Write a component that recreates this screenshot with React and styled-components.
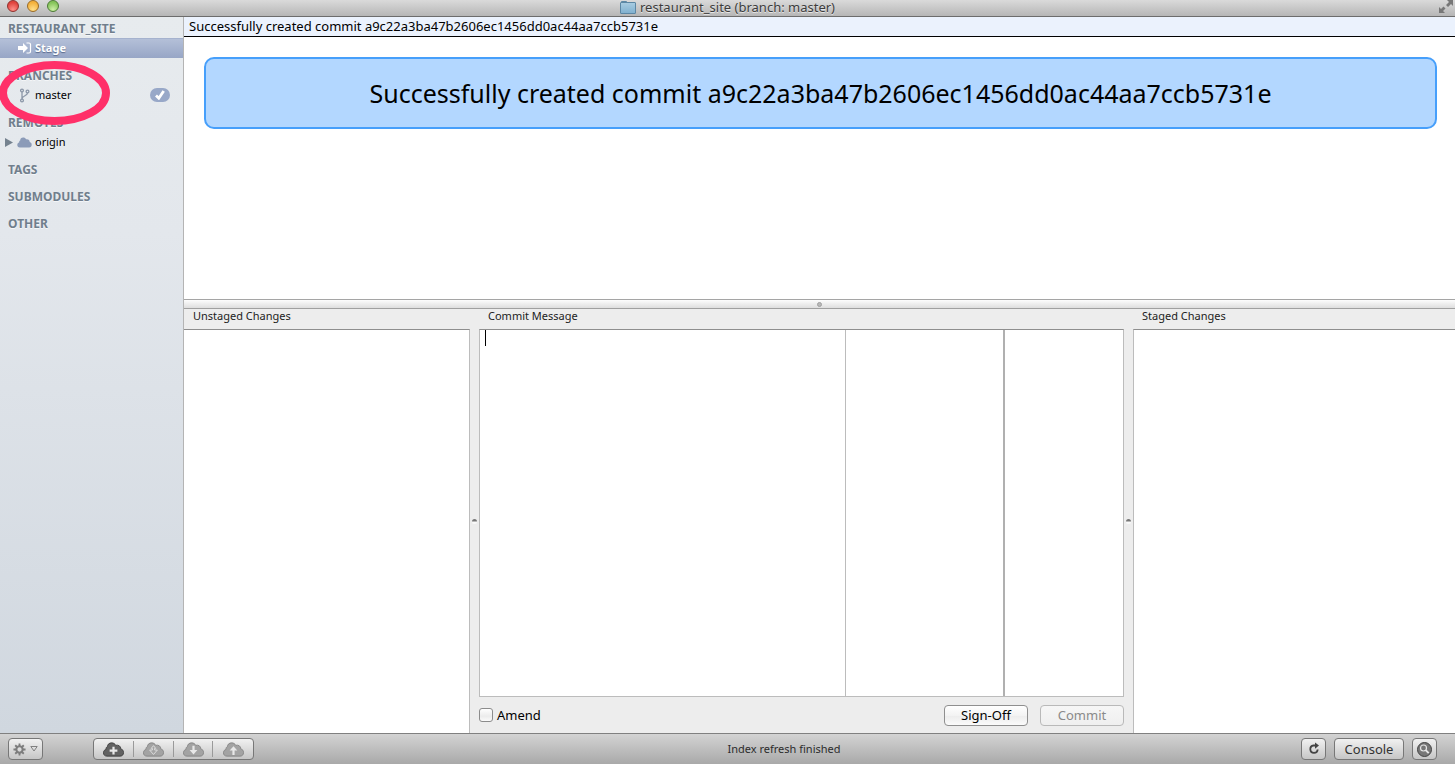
import React from "react";
import styled, { createGlobalStyle, css } from "styled-components";

const GlobalStyle = createGlobalStyle`
  * { box-sizing: border-box; }
  html, body, #root { height: 100%; }
  body {
    margin: 0;
    overflow: hidden;
    font-family: "Noto Sans", "Open Sans", sans-serif;
    font-size: 12px;
    color: #000;
  }
  button, input, textarea { font: inherit; color: inherit; }
`;

const Window = styled.div`
  display: flex;
  flex-direction: column;
  height: 100%;
  background: #fff;
`;

const TitleBar = styled.header`
  position: relative;
  flex: none;
  display: flex;
  align-items: center;
  justify-content: center;
  height: 17px;
  padding-bottom: 2px;
  background: linear-gradient(#dadada, #b6b6b6);
  border-bottom: 1px solid #6c6c6c;
`;

const TrafficLights = styled.div`
  position: absolute;
  left: 7px;
  top: 0;
  display: flex;
  gap: 8px;
`;

const lightColors = {
  red: ["#ff8f88", "#e0443e", "#8f302d"],
  amber: ["#ffe08a", "#f4b13c", "#9a6a24"],
  green: ["#cdf0a6", "#86c45a", "#4b7a35"],
};

const Light = styled.button`
  width: 12px;
  height: 12px;
  padding: 0;
  border-radius: 50%;
  border: 1px solid ${(p) => lightColors[p.$tone][2]};
  background: radial-gradient(
    circle at 50% 85%,
    ${(p) => lightColors[p.$tone][0]},
    ${(p) => lightColors[p.$tone][1]} 70%
  );
`;

const Title = styled.h1`
  display: flex;
  align-items: center;
  gap: 4px;
  margin: 0;
  font-size: 13px;
  line-height: 14px;
  font-weight: 400;
  color: #3c3c3c;
  text-shadow: 0 1px 0 #e6e6e6;
`;

const FullScreen = styled.button`
  position: absolute;
  right: 1px;
  top: 0;
  display: flex;
  padding: 0;
  border: 0;
  background: none;
`;

const Body = styled.div`
  flex: 1;
  display: flex;
  min-height: 0;
`;

const Sidebar = styled.nav`
  position: relative;
  flex: none;
  width: 184px;
  background: linear-gradient(#e7ebee, #e3e7ec 30%, #d0d7df);
  border-right: 1px solid #b4b4b4;
`;

const Heading = styled.h2`
  height: ${(p) => (p.$first ? 21 : 27)}px;
  margin: 0;
  padding: ${(p) => (p.$first ? 3 : 9)}px 8px 0;
  font-size: 12px;
  line-height: 18px;
  font-weight: 700;
  color: #707e8c;
  text-shadow: 0 1px 0 #f4f6f8;
`;

const Item = styled.a`
  display: flex;
  align-items: center;
  height: 20px;
  padding: 0 13px 0 5px;
  font-size: 11px;
  line-height: 20px;
  color: #000;
  text-decoration: none;
  ${(p) =>
    p.$selected &&
    css`
      color: #fff;
      font-weight: 700;
      background: linear-gradient(#b5c1d9, #97a6c6);
      box-shadow: inset 0 1px 0 #a5b2ce;
      text-shadow: 0 1px 1px #5b6a8c;
    `}
`;

const Twisty = styled.span`
  display: flex;
  width: 12px;
`;

const ItemIcon = styled.span`
  display: flex;
  width: 18px;
`;

const Badge = styled.span`
  display: flex;
  align-items: center;
  justify-content: center;
  width: 20px;
  height: 14px;
  margin-left: auto;
  border-radius: 7px;
  background: #98a8c8;
`;

const Highlight = styled.svg`
  position: absolute;
  left: -2px;
  top: 43px;
  pointer-events: none;
`;

const Main = styled.main`
  flex: 1;
  min-width: 0;
  display: flex;
  flex-direction: column;
`;

const StatusStrip = styled.div`
  flex: none;
  height: 20px;
  padding: 0 5px;
  font-size: 13px;
  line-height: 19px;
  background: #ebf2fd;
  border-bottom: 1px solid #000;
`;

const MessagePane = styled.section`
  flex: 262 1 0;
  display: flow-root;
  min-height: 0;
  background: #fff;
`;

const Notice = styled.p`
  margin: 20px 18px 0 20px;
  padding: 16px;
  font-size: 25px;
  line-height: 36px;
  text-align: center;
  background: #b3d7ff;
  border: 2px solid #469ffb;
  border-radius: 10px;
`;

const HorizontalSplitter = styled.div`
  flex: none;
  display: flex;
  align-items: center;
  justify-content: center;
  height: 10px;
  background: linear-gradient(#fdfdfd, #dedede);
  border-top: 1px solid #a5a5a5;
  border-bottom: 1px solid #a0a0a0;
`;

const Grip = styled.span`
  width: 5px;
  height: 5px;
  border-radius: 50%;
  border: 1px solid #a0a0a0;
  background: #b9b9b9;
`;

const StagePane = styled.section`
  flex: 424 1 0;
  min-height: 0;
  display: grid;
  grid-template-columns: 286fr 9px 645fr 9px 322fr;
  background: #ededed;
`;

const Column = styled.div`
  display: flex;
  flex-direction: column;
  min-width: 0;
  min-height: 0;
`;

const labelText = css`
  flex: none;
  height: 20px;
  margin: 0;
  padding: 0 9px;
  font-size: 11px;
  line-height: 14px;
  font-weight: 400;
  color: #222;
`;

const ColumnTitle = styled.h3`
  ${labelText}
`;

const ColumnLabel = styled.label`
  ${labelText}
`;

const FileList = styled.div`
  flex: 1;
  background: #fff;
  border-top: 1px solid #8e8e8e;
  border-left: ${(p) => (p.$edge === "left" ? "1px solid #bcbcbc" : "0")};
  border-right: ${(p) => (p.$edge === "right" ? "1px solid #bcbcbc" : "0")};
`;

const VerticalSplitter = styled.div`
  display: flex;
  align-items: center;
  justify-content: center;
`;

const SmallGrip = styled.span`
  width: 5px;
  height: 5px;
  border-radius: 50%;
  background: linear-gradient(#777 40%, #fafafa 60%);
`;

const Editor = styled.textarea`
  flex: 1;
  display: block;
  width: 100%;
  min-height: 0;
  margin: 0;
  padding: 2px 5px;
  resize: none;
  outline: none;
  border: 1px solid #bcbcbc;
  border-top-color: #8e8e8e;
  border-radius: 0;
  background:
    linear-gradient(#000, #000) 5px 0 / 1px 16px no-repeat,
    linear-gradient(#bcbcbc, #bcbcbc) 365px 0 / 1px 100% no-repeat,
    linear-gradient(#b0b0b0, #b0b0b0) 523px 0 / 2px 100% no-repeat,
    #fff;
`;

const Actions = styled.div`
  flex: none;
  display: flex;
  align-items: center;
  gap: 12px;
  height: 36px;
`;

const Amend = styled.label`
  display: flex;
  align-items: center;
  gap: 4px;
  margin-right: auto;
  font-size: 13px;
  line-height: 20px;
`;

const Checkbox = styled.input`
  appearance: none;
  width: 14px;
  height: 14px;
  margin: 0;
  border: 1px solid #8c8c8c;
  border-radius: 3px;
  background: linear-gradient(#fff, #ececec 60%, #fbfbfb);
`;

const PushButton = styled.button`
  width: 84px;
  height: 21px;
  padding: 0;
  font-size: 13px;
  line-height: 18px;
  border: 1px solid #8f8f8f;
  border-radius: 4px;
  background: linear-gradient(#fff, #f3f3f3 50%, #ececec 51%, #fbfbfb);
  &:disabled {
    color: #8a8a8a;
    border-color: #b9b9b9;
    background: linear-gradient(#f6f6f6, #efefef);
  }
`;

const Footer = styled.footer`
  flex: none;
  display: grid;
  grid-template-columns: 1fr 1fr;
  align-items: center;
  height: 31px;
  background: linear-gradient(#d3d3d3, #a9a9a9);
  border-top: 1px solid #808080;
`;

const FooterLeft = styled.div`
  display: flex;
  align-items: center;
  gap: 50px;
  padding-left: 8px;
`;

const FooterRight = styled.div`
  display: flex;
  align-items: center;
  gap: 8px;
  padding-right: 18px;
`;

const FooterStatus = styled.span`
  margin-right: auto;
  font-size: 11px;
  line-height: 16px;
  color: #2c2c2c;
`;

const ToolButton = styled.button`
  display: flex;
  align-items: center;
  justify-content: center;
  gap: 4px;
  width: ${(p) => p.$width}px;
  height: 22px;
  padding: 0;
  font-size: 13px;
  line-height: 20px;
  color: #333;
  border: 1px solid #777;
  border-radius: 4px;
  background: linear-gradient(#f1f1f1, #c6c6c6);
`;

const Segments = styled.div`
  display: flex;
  height: 22px;
  width: 161px;
  border: 1px solid #777;
  border-radius: 4px;
  background: linear-gradient(#f1f1f1, #c6c6c6);
`;

const Segment = styled.button`
  flex: 1;
  display: flex;
  align-items: center;
  justify-content: center;
  padding: 0;
  border: 0;
  background: linear-gradient(#9a9a9a, #9a9a9a) right center / 1px 16px no-repeat;
  &:last-child { background: none; }
`;

function FolderIcon() {
  return (
    <svg width="16" height="13" viewBox="0 0 16 13" aria-hidden="true">
      <defs>
        <linearGradient id="folder" x1="0" y1="0" x2="0" y2="1">
          <stop offset="0" stopColor="#a9cde2" />
          <stop offset="1" stopColor="#7fb0cf" />
        </linearGradient>
      </defs>
      <path d="M1.5 2V.5h5L7.500 2" fill="#a9cde2" stroke="#5e89a5" />
      <rect x=".5" y="1.500" width="15" height="11" rx=".5" fill="url(#folder)" stroke="#5c87a4" />
    </svg>
  );
}

function FullScreenIcon() {
  return (
    <svg width="15" height="14" viewBox="0 0 15 14" aria-hidden="true">
      <g fill="#777">
        <path d="M8 0h6v6l-2-2-3 3-2-2 3-3z" />
        <path d="M0 13V7l2 2 2.500-2.500 2 2L4 11l2 2z" />
      </g>
    </svg>
  );
}

function StageIcon() {
  return (
    <svg width="15" height="12" viewBox="0 0 15 12" aria-hidden="true">
      <path d="M1 4h5V1l5 5-5 5V8H1z" fill="#fff" />
      <path d="M9.500 1H12a1.500 1.500 0 0 1 1.500 1.500v7A1.500 1.500 0 0 1 12 11H9.500" fill="none" stroke="#fff" strokeWidth="1.200" />
    </svg>
  );
}

function BranchIcon() {
  return (
    <svg width="14" height="15" viewBox="0 0 14 15" aria-hidden="true">
      <g fill="none" stroke="#8b97a8" strokeWidth="1.300">
        <circle cx="5" cy="2.500" r="1.400" />
        <circle cx="5" cy="12.500" r="1.400" />
        <circle cx="10.500" cy="3.500" r="1.400" />
        <path d="M5 4v7M10.500 5c0 3-5.500 2.500-5.500 6" />
      </g>
    </svg>
  );
}

const cloudPath =
  "M3.600 12.500C1.500 12.500.4 11.200.4 9.500c0-1.600.9-2.700 2.300-3C2.600 5.200 3 4.300 4 4 4 2 5.600.5 7.800.5c1.700 0 3 .8 3.700 2.200 2.500-.6 4.700.8 4.600 3.300 1.700.4 2.500 1.600 2.500 3.200 0 2-1.200 3.300-3.200 3.300z";

function OriginIcon() {
  return (
    <svg width="15" height="11" viewBox="0 0 19 13" preserveAspectRatio="none" aria-hidden="true">
      <path d={cloudPath} fill="#8b9bb8" />
    </svg>
  );
}

const cloudMarks = {
  add: "M8.500 4h2v2.500H13v2h-2.500V11h-2V8.500H6v-2h2.500z",
  fetch: "M9.500 3l2 2.500h-1V7H13l-3.500 4L6 7h2.500V5.500h-1z",
  pull: "M8.500 3h2v4H13l-3.500 4L6 7h2.500z",
  push: "M8.500 11.500h2v-4H13l-3.500-4-3.500 4h2.500z",
};

function CloudIcon({ mark, active }) {
  const tint = active ? "#626262" : "#a3a3a3";
  return (
    <svg width="21" height="15" viewBox="0 0 19 13" aria-hidden="true">
      <path d={cloudPath} fill={tint} stroke={active ? "#3e3e3e" : "#858585"} strokeWidth=".8" />
      <path
        d={cloudMarks[mark]}
        fill={mark === "fetch" ? "none" : "#e8e8e8"}
        stroke={mark === "fetch" ? "#dcdcdc" : "none"}
        strokeWidth=".9"
      />
    </svg>
  );
}

function GearIcon() {
  return (
    <svg width="13" height="13" viewBox="-7 -7 14 14" aria-hidden="true">
      <g stroke="#7d7d7d" strokeWidth="2">
        {[0, 45, 90, 135].map((angle) => (
          <path key={angle} d="M0-6.500V-3M0 3v3.500" transform={`rotate(${angle})`} />
        ))}
      </g>
      <circle r="3.400" fill="none" stroke="#7d7d7d" strokeWidth="2.200" />
    </svg>
  );
}

function ReloadIcon() {
  return (
    <svg width="14" height="14" viewBox="0 0 14 14" aria-hidden="true">
      <path d="M8.500 3.500H6.500a3.700 3.700 0 1 0 4.200 4" fill="none" stroke="#444" strokeWidth="1.800" />
      <path d="M8 .5l4 3-4 3.300z" fill="#444" />
    </svg>
  );
}

function MagnifierIcon() {
  return (
    <svg width="15" height="15" viewBox="0 0 15 15" aria-hidden="true">
      <circle cx="7.500" cy="7.500" r="7" fill="#777" stroke="#444" />
      <circle cx="6.500" cy="6" r="3" fill="#777" stroke="#e6e6e6" strokeWidth="1.200" />
      <path d="M8.700 8.200l3 3" stroke="#e6e6e6" strokeWidth="1.900" />
    </svg>
  );
}

const commitText = "Successfully created commit a9c22a3ba47b2606ec1456dd0ac44aa7ccb5731e";

export default function App() {
  return (
    <Window>
      <GlobalStyle />
      <TitleBar>
        <TrafficLights>
          <Light $tone="red" aria-label="Close" />
          <Light $tone="amber" aria-label="Minimize" />
          <Light $tone="green" aria-label="Zoom" />
        </TrafficLights>
        <Title>
          <FolderIcon />
          restaurant_site (branch: master)
        </Title>
        <FullScreen aria-label="Full screen">
          <FullScreenIcon />
        </FullScreen>
      </TitleBar>

      <Body>
        <Sidebar>
          <Heading $first>RESTAURANT_SITE</Heading>
          <Item href="#stage" $selected>
            <Twisty />
            <ItemIcon><StageIcon /></ItemIcon>
            Stage
          </Item>
          <Heading>BRANCHES</Heading>
          <Item href="#master">
            <Twisty />
            <ItemIcon><BranchIcon /></ItemIcon>
            master
            <Badge>
              <svg width="10" height="10" viewBox="0 0 10 10" aria-hidden="true">
                <path d="M1 5.500l2.800 2.700L8.700 1" fill="none" stroke="#fff" strokeWidth="2.800" />
              </svg>
            </Badge>
          </Item>
          <Heading>REMOTES</Heading>
          <Item href="#origin">
            <Twisty>
              <svg width="8" height="9" viewBox="0 0 8 9" aria-hidden="true">
                <path d="M0 0l8 4.500L0 9z" fill="#75828f" />
              </svg>
            </Twisty>
            <ItemIcon><OriginIcon /></ItemIcon>
            origin
          </Item>
          <Heading>TAGS</Heading>
          <Heading>SUBMODULES</Heading>
          <Heading>OTHER</Heading>
          <Highlight width="114" height="66" viewBox="0 0 114 66" aria-hidden="true">
            <ellipse cx="56.500" cy="33" rx="51.500" ry="28" fill="none" stroke="#ff3069" strokeWidth="8" />
          </Highlight>
        </Sidebar>

        <Main>
          <StatusStrip>{commitText}</StatusStrip>
          <MessagePane>
            <Notice>{commitText}</Notice>
          </MessagePane>
          <HorizontalSplitter><Grip /></HorizontalSplitter>
          <StagePane>
            <Column>
              <ColumnTitle>Unstaged Changes</ColumnTitle>
              <FileList $edge="right" />
            </Column>
            <VerticalSplitter><SmallGrip /></VerticalSplitter>
            <Column>
              <ColumnLabel htmlFor="commit-message">Commit Message</ColumnLabel>
              <Editor id="commit-message" />
              <Actions>
                <Amend>
                  <Checkbox type="checkbox" />
                  Amend
                </Amend>
                <PushButton>Sign-Off</PushButton>
                <PushButton disabled>Commit</PushButton>
              </Actions>
            </Column>
            <VerticalSplitter><SmallGrip /></VerticalSplitter>
            <Column>
              <ColumnTitle>Staged Changes</ColumnTitle>
              <FileList $edge="left" />
            </Column>
          </StagePane>
        </Main>
      </Body>

      <Footer>
        <FooterLeft>
          <ToolButton $width={35} aria-label="Actions">
            <GearIcon />
            <svg width="8" height="6" viewBox="0 0 8 6" aria-hidden="true">
              <path d="M.8.500h6.400L4 5z" fill="none" stroke="#808080" />
            </svg>
          </ToolButton>
          <Segments>
            <Segment aria-label="Add remote"><CloudIcon mark="add" active /></Segment>
            <Segment aria-label="Fetch"><CloudIcon mark="fetch" /></Segment>
            <Segment aria-label="Pull"><CloudIcon mark="pull" /></Segment>
            <Segment aria-label="Push"><CloudIcon mark="push" /></Segment>
          </Segments>
        </FooterLeft>
        <FooterRight>
          <FooterStatus>Index refresh finished</FooterStatus>
          <ToolButton $width={25} aria-label="Refresh"><ReloadIcon /></ToolButton>
          <ToolButton $width={70}>Console</ToolButton>
          <ToolButton $width={25} aria-label="Search"><MagnifierIcon /></ToolButton>
        </FooterRight>
      </Footer>
    </Window>
  );
}
